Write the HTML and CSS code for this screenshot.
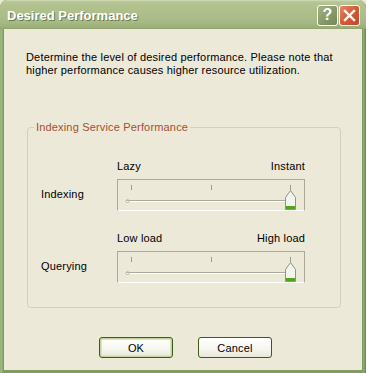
FILE: index.html
```html
<!DOCTYPE html>
<html lang="en">

<head>
    <meta charset="UTF-8">
    <meta name="viewport" content="width=device-width, initial-scale=1.0">
    <title>Desired Performance</title>

    <link rel="stylesheet" href="styles.css">
</head>

<body>

    <div class="window">

        <div class="titlebar">
            <span class="titlebar__text">Desired Performance</span>
            <div class="titlebar__buttons">
                <span class="caption-btn caption-btn--help">?</span>
                <span class="caption-btn caption-btn--close">
                    <svg width="13" height="13" viewBox="0 0 13 13">
                        <path d="M2 2 L11 11 M11 2 L2 11" stroke="#fff" stroke-width="2.4" stroke-linecap="square" />
                    </svg>
                </span>
            </div>
        </div>
        <!--/titlebar-->

        <div class="dialog">
            <p class="dialog__intro">Determine the level of desired performance. Please note that higher performance causes higher resource utilization.</p>

            <fieldset class="group">
                <legend>Indexing Service Performance</legend>

                <div class="setting">
                    <label class="setting__name">Indexing</label>
                    <div class="setting__control">
                        <div class="setting__ends">
                            <span>Lazy</span>
                            <span>Instant</span>
                        </div>
                        <div class="trackbar">
                            <svg width="186" height="30" viewBox="0 0 186 30">
                                <path d="M13.5 5 V10 M93.5 5 V10 M172.5 5 V10" stroke="#9a9a8e" stroke-width="1" />
                                <rect x="9" y="20" width="168" height="1" fill="#a9a99c" />
                                <rect x="9" y="21" width="168" height="1" fill="#fff" />
                                <circle cx="9.5" cy="21" r="1.5" fill="none" stroke="#b8b8ac" stroke-width="1" />
                                <g transform="translate(167 10)">
                                    <path d="M0.5 7.5 L5.5 0.5 L10.5 7.5 V19.5 H0.5 Z" fill="#f4f4ee" stroke="#8e9486" stroke-width="1" />
                                    <rect x="1" y="16" width="9" height="3" fill="#55a21f" />
                                </g>
                            </svg>
                        </div>
                    </div>
                </div>
                <!--/setting-->

                <div class="setting">
                    <label class="setting__name">Querying</label>
                    <div class="setting__control">
                        <div class="setting__ends">
                            <span>Low load</span>
                            <span>High load</span>
                        </div>
                        <div class="trackbar">
                            <svg width="186" height="30" viewBox="0 0 186 30">
                                <path d="M13.5 5 V10 M93.5 5 V10 M172.5 5 V10" stroke="#9a9a8e" stroke-width="1" />
                                <rect x="9" y="20" width="168" height="1" fill="#a9a99c" />
                                <rect x="9" y="21" width="168" height="1" fill="#fff" />
                                <circle cx="9.5" cy="21" r="1.5" fill="none" stroke="#b8b8ac" stroke-width="1" />
                                <g transform="translate(167 10)">
                                    <path d="M0.5 7.5 L5.5 0.5 L10.5 7.5 V19.5 H0.5 Z" fill="#f4f4ee" stroke="#8e9486" stroke-width="1" />
                                    <rect x="1" y="16" width="9" height="3" fill="#55a21f" />
                                </g>
                            </svg>
                        </div>
                    </div>
                </div>
                <!--/setting-->
            </fieldset>

            <div class="dialog__buttons">
                <button class="btn btn--default">OK</button>
                <button class="btn">Cancel</button>
            </div>
        </div>
        <!--/dialog-->

    </div>
    <!--/window-->

</body>

</html>
```

FILE: styles.css
```css
* {
    box-sizing: border-box;
}

body {
    margin: 0;
    background: #ece9d8;
    font-family: "Liberation Sans", Arial, sans-serif;
    font-size: 11px;
    letter-spacing: 0.17px;
    color: #000;
}

.window {
    display: flex;
    flex-direction: column;
    width: 366px;
    height: 373px;
    background: linear-gradient(to right, #88a66a, #a6bf88 1px, #98b47a 2px, #7f9d61 3px, #7f9d61 363px, #98b47a 364px, #6d8b50 365px);
    border-radius: 7px 7px 0 0;
    overflow: hidden;
}

.titlebar {
    display: flex;
    align-items: center;
    justify-content: space-between;
    height: 29px;
    padding: 0 6px 0 7px;
    background: linear-gradient(to bottom, #dbe3c2 0, #bccb9a 1px, #b4c491 3px, #aebf8b 12px, #a7b984 22px, #9db07a 27px, #8da46c 29px);
    border-radius: 7px 7px 0 0;
}

.titlebar__text {
    font-size: 13px;
    font-weight: bold;
    color: #fff;
    text-shadow: 1px 1px 0 #6c7a52;
    letter-spacing: 0;
    margin-top: 2px;
}

.titlebar__buttons {
    display: flex;
    gap: 1px;
    margin-top: 1px;
}

.caption-btn {
    display: flex;
    align-items: center;
    justify-content: center;
    width: 21px;
    height: 21px;
    border: 1px solid #fff;
    border-radius: 3px;
    color: #fff;
    font-size: 16px;
    font-weight: bold;
}

.caption-btn--help {
    background: linear-gradient(135deg, #a5b485, #8a9a68 50%, #76875a);
}

.caption-btn--close {
    background: linear-gradient(135deg, #e9866a, #d65d3a 45%, #c1462a);
}

.dialog {
    flex: 1;
    display: flex;
    flex-direction: column;
    margin: 0 4px 3px 4px;
    padding: 22px 21px 0 22px;
    background: #ece9d8;
}

.dialog__intro {
    margin: 0;
    line-height: 13px;
    width: 310px;
}

.group {
    margin: 44px 0 0 1px;
    padding: 26px 0 24px 0;
    border: 1px solid #d0d0bf;
    border-radius: 4px;
}

.group legend {
    margin-left: 6px;
    padding: 0 2px;
    color: #a44f30;
    line-height: 13px;
}

.setting {
    display: flex;
    align-items: flex-end;
    margin-bottom: 21px;
}

.setting:last-child {
    margin-bottom: 0;
}

.setting__name {
    width: 89px;
    padding-left: 13px;
    line-height: 13px;
    margin-bottom: 10px;
    color: #000;
}

.setting__control {
    display: flex;
    flex-direction: column;
    width: 188px;
}

.setting__ends {
    display: flex;
    justify-content: space-between;
    line-height: 13px;
    margin-bottom: 6px;
}

.trackbar {
    display: flex;
    height: 32px;
    border: 1px solid #a9a89c;
    border-bottom-color: #fff;
}

.dialog__buttons {
    display: flex;
    justify-content: center;
    gap: 25px;
    margin-top: 29px;
    padding-left: 4px;
}

.btn {
    width: 74px;
    height: 21px;
    padding: 0;
    font-family: "Liberation Sans", Arial, sans-serif;
    font-size: 11px;
    letter-spacing: 0.17px;
    color: #000;
    border: 1px solid #3d5a1c;
    border-radius: 3px;
    background: linear-gradient(to bottom, #fff, #f6f5ee 60%, #e9e7d9);
}

.btn--default {
    box-shadow: inset 0 0 0 1px #c3d4a0, inset 0 0 0 2px #d9e4c2;
}
```
